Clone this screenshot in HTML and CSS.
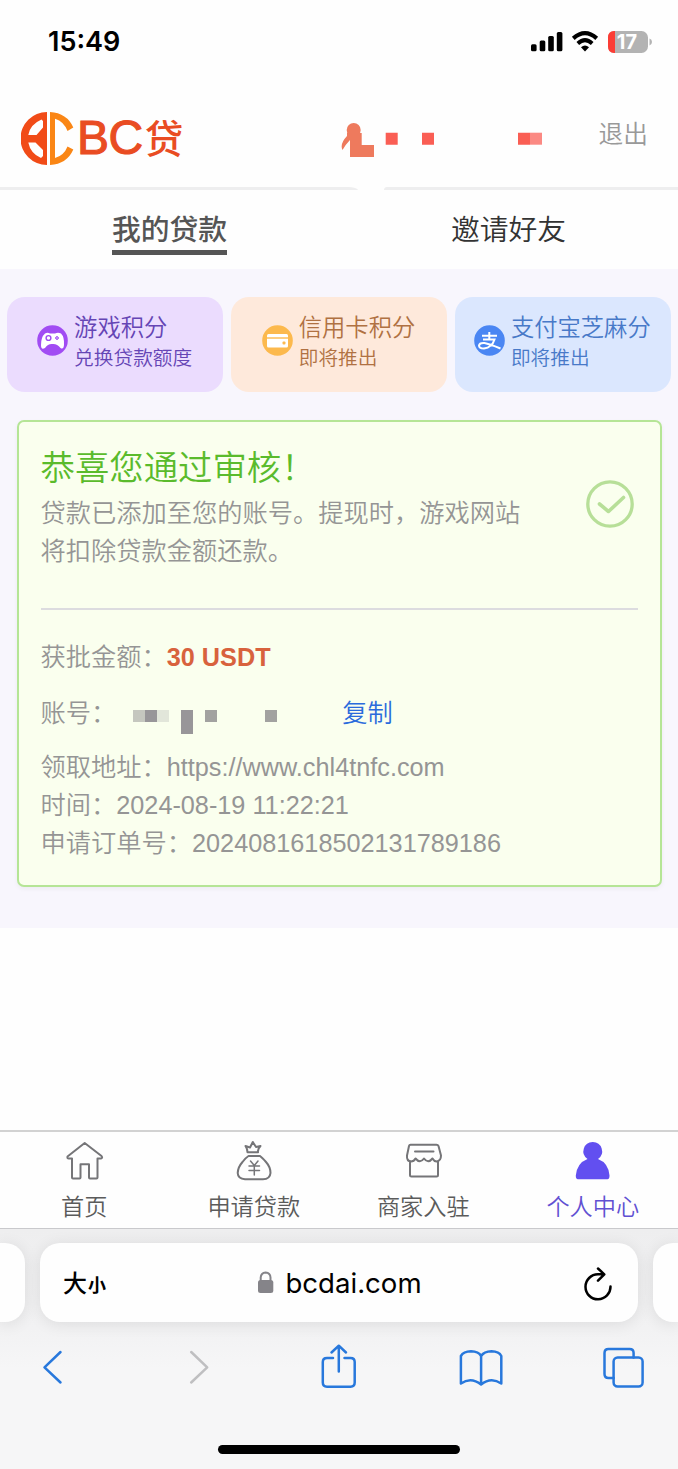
FILE: index.html
```html
<!DOCTYPE html>
<html lang="zh-CN">
<head>
<meta charset="utf-8">
<title>BC贷</title>
<link rel="stylesheet" href="styles.css">
</head>
<body>
<div class="status">
  <span class="time">15:49</span>
  <svg class="status-icons" viewBox="528 28 126 28" width="126" height="28">
    <rect x="531" y="44.200" width="5.600" height="7" rx="1.500"/><rect x="539.700" y="40.500" width="5.600" height="10.700" rx="1.500"/><rect x="548.200" y="36" width="5.600" height="15.200" rx="1.500"/><rect x="556.800" y="32" width="5.600" height="19.200" rx="1.500"/>
    <path d="M573.300 38.400Q585 27.800 596.700 38.400" fill="none" stroke="#000" stroke-width="4.200"/>
    <path d="M577.800 43.400Q585 37 592.200 43.400" fill="none" stroke="#000" stroke-width="4"/>
    <path d="M585 51.500L581 47.300Q585 43.800 589 47.300Z"/>
    <rect x="608" y="31" width="40" height="22" rx="6.500" fill="#b3b3b3"/>
    <path d="M615 31h-1q-6 0-6 6.500v9q0 6.500 6 6.500h1z" fill="#fb3d35"/>
    <path d="M649.500 38.500q2.500.8 2.500 3.500t-2.500 3.500z" fill="#b3b3b3"/>
    <text x="627" y="49.200" text-anchor="middle" class="battery-text">17</text>
  </svg>
</div>
<header class="header">
  <svg class="mark" viewBox="21 112 53 53" width="53" height="53">
    <path fill="#f14b17" fill-rule="evenodd" d="M47 112A26.500 26.500 0 0 0 47 165ZM41.500 119.500L43 121V127.500L36.500 135H28.300Q30 124.500 41.500 119.500ZM28.300 142.500H35.500L43 150V156L41 158Q30.500 153.500 28.300 142.500Z"/>
    <path fill="#fa8615" d="M50 112Q67 113 73.300 127.500L67.500 131Q64 121.500 55 118.700V158Q64 155.500 67.500 146.500L73.300 149.500Q67 164 50 165Z"/>
  </svg>
  <span class="brand">BC<b>贷</b></span>
  <svg class="user" viewBox="340 120 204 40" width="204" height="40">
    <circle cx="353.700" cy="130" r="7" fill="#ee7a5d"/>
    <path fill="#ee7a5d" d="M347 133H361.700V145H374V157H350V140Q346 144 342.500 150Q339.500 144 347 136Z"/>
    <path fill="#fa5e54" d="M385.700 132.700h12v12h-12zM422 132.700h12v12h-12zM518 132.700h12v12h-12z"/>
    <path fill="#fb8983" d="M530 132.700h12v12h-12z"/>
  </svg>
  <a class="logout">退出</a>
</header>
<div class="rule"><i></i><i></i></div>
<nav class="tabs">
  <a class="tab tab-active"><span>我的贷款</span></a>
  <a class="tab"><span>邀请好友</span></a>
</nav>
<main class="main">
  <section class="points">
    <div class="point purple">
      <svg viewBox="0 0 31 31" width="31" height="31"><circle cx="15.500" cy="15.500" r="15.300" fill="#a14cf3"/><path d="M8 8.500Q10.500 7 13 8.500H18Q21 7 24 8.500Q27.500 12 27 20Q26.500 25 23.500 23Q20 18.500 15.500 19Q11 18.500 8 23Q4 25.500 4 20Q4 12 8 8.500Z" fill="#fff"/><circle cx="11.500" cy="13" r="2.400" fill="none" stroke="#a14cf3" stroke-width="1.400"/><path d="M18 13h4m-2-2v4" stroke="#a14cf3" stroke-width="1.500" stroke-dasharray="1.500 1"/></svg>
      <div><h3>游戏积分</h3><p>兑换贷款额度</p></div>
    </div>
    <div class="point orange">
      <svg viewBox="0 0 31 31" width="31" height="31"><circle cx="15.500" cy="15.500" r="15.300" fill="#fcb94d"/><rect x="5" y="9" width="21" height="13.500" rx="1.500" fill="#fff"/><path d="M5 13h21" stroke="#fcb94d" stroke-width="1.400"/><rect x="20.500" y="16.500" width="3" height="3" rx="1" fill="#fcb94d"/></svg>
      <div><h3>信用卡积分</h3><p>即将推出</p></div>
    </div>
    <div class="point blue">
      <svg viewBox="0 0 31 31" width="31" height="31"><circle cx="15.500" cy="15.500" r="15.300" fill="#4a86f3"/><g fill="none" stroke="#fff" stroke-width="2"><path d="M8 10.800H23M15.300 7V14.500M9 14.500H20.500Q18 22.500 10 23.500Q5 23.500 5 20.500Q5.500 17.500 10.500 18Q15 18.800 26.500 23.500"/></g></svg>
      <div><h3>支付宝芝麻分</h3><p>即将推出</p></div>
    </div>
  </section>
  <section class="card">
    <div class="card-top">
      <div>
        <h2>恭喜您通过审核！</h2>
        <p>贷款已添加至您的账号。提现时，游戏网站<br>将扣除贷款金额还款。</p>
      </div>
      <svg class="check" viewBox="0 0 48 48" width="48" height="48" fill="none" stroke="#b7df98"><circle cx="24" cy="24" r="22.200" stroke-width="3.300"/><path d="M13.500 24L22.500 31.500L37.500 17.500" stroke-width="3.600" stroke-linecap="round" stroke-linejoin="round"/></svg>
    </div>
    <div class="line amount">获批金额：<strong>30 USDT</strong></div>
    <div class="line account">账号：
      <svg class="mask" viewBox="133 711 145 25" width="145" height="25">
        <path fill="#c5c7bf" d="M133 711h12v12h-12z"/><path fill="#989699" d="M145 711h12v12h-12zM181 711h12v24h-12z"/><path fill="#e2e6da" d="M157 711h12v12h-12z"/><path fill="#a2a2a0" d="M205 711h12v12h-12zM265 711h12v12h-12z"/>
      </svg>
      <a class="copy">复制</a>
    </div>
    <div class="line">领取地址：https://www.chl4tnfc.com</div>
    <div class="line">时间：2024-08-19 11:22:21</div>
    <div class="line">申请订单号：2024081618502131789186</div>
  </section>
</main>
<nav class="bottom">
  <a class="item"><svg viewBox="65 1140 40 42" width="40" height="42"><path d="M84.700 1143L67.500 1156.500Q67 1158.700 69 1158.500H72V1177.500Q72 1178.500 73 1178.500H79.500Q80.500 1178.500 80.500 1177.500V1164.300H89V1177.500Q89 1178.500 90 1178.500H96.500Q97.500 1178.500 97.500 1177.500V1158.500H101Q103 1158 101.500 1156Z"/></svg><span>首页</span></a>
  <a class="item"><svg viewBox="233 1140 42 42" width="42" height="42"><path d="M247.500 1152.300Q247.500 1149 245.500 1146L250 1147.500L252.800 1142L256 1147L260.500 1146Q257.500 1149 258 1152.300ZM248.500 1156H260Q262 1157.500 266 1162Q270.500 1167 270.500 1173Q270 1179.200 263 1179.200H245Q238 1179 237.700 1173Q238 1167 242.500 1162Q246 1157.500 248.500 1156Z"/><path d="M250.500 1161L254.300 1165.500L258 1161M249 1166H259.500M249 1170.500H259.500M254.300 1165.500V1175" stroke-width="1.500"/></svg><span>申请贷款</span></a>
  <a class="item"><svg viewBox="403 1140 42 42" width="42" height="42"><path d="M410.500 1144.700H436.500Q438 1144.700 438.500 1146L441 1155.500Q441 1161 436.500 1161.500Q434 1161.300 432.500 1158.500Q428 1164 424 1158.500Q420 1164 415.500 1158.500Q414 1161.500 411 1161.500Q406.500 1161 407 1155.500L409 1146Q409.300 1144.700 410.500 1144.700ZM410 1161V1175Q410 1176.500 411.500 1176.500H436.500Q438 1176.500 438 1175V1161M415 1151.500H433.500"/></svg><span>商家入驻</span></a>
  <a class="item item-active"><svg viewBox="572 1140 42 42" width="42" height="42"><path d="M592.700 1142A9.300 9.300 0 0 1 598 1159Q608.500 1163 609.500 1175.500Q609.500 1179.300 607.500 1179.300H578Q575.700 1179.300 575.800 1175.500Q577 1163 587.500 1159A9.300 9.300 0 0 1 592.700 1142Z"/></svg><span>个人中心</span></a>
</nav>
<footer class="browser">
  <div class="address-row">
    <div class="peek"></div>
    <div class="address">
      <span class="size">大<small>小</small></span>
      <span class="url"><svg viewBox="0 0 17 23" width="17" height="23"><rect x="1" y="9" width="15.300" height="13" rx="2.500" fill="#858489"/><path d="M3.700 10V6.500Q4 1.800 8.600 1.500Q13.300 1.800 13.500 6.500V10" fill="none" stroke="#858489" stroke-width="2"/></svg>bcdai.com</span>
      <svg viewBox="582 1263 32 36" width="32" height="36" fill="none" stroke="#000" stroke-width="2.500" stroke-linecap="round" stroke-linejoin="round"><path d="M610.500 1284.500A12.500 12.500 0 1 1 598 1272.300H604M598 1266.500L604.300 1272.300L598 1278.700"/></svg>
    </div>
    <div class="peek"></div>
  </div>
  <div class="toolbar">
    <svg viewBox="40 1343 25 47" width="25" height="47"><path d="M60.500 1352L44.500 1367.300L60.500 1382.500"/></svg>
    <svg class="forward" viewBox="187 1343 25 47" width="25" height="47"><path d="M191.200 1352L207.200 1367.300L191.200 1382.500"/></svg>
    <svg class="share" viewBox="319 1343 40 47" width="40" height="47"><path d="M333 1358H327Q322.800 1358 322.800 1362V1382.500Q322.800 1386.700 327 1386.700H350.500Q354.700 1386.700 354.700 1382.500V1362Q354.700 1358 350.500 1358H344.500M338.800 1371.500V1346M331.500 1352.500L338.800 1345.700L346 1352.500"/></svg>
    <svg class="book" viewBox="457 1343 48 47" width="48" height="47"><path d="M481.100 1356V1384.500Q471 1376.500 460.900 1383.500V1356Q463.500 1351.500 471 1351.300Q478.500 1351.500 481.100 1356Q484 1351.500 491.500 1351.300Q499 1351.500 501.300 1356V1383.500Q491 1376.500 481.100 1384.500"/></svg>
    <svg class="windows" viewBox="601 1343 45 47" width="45" height="47"><rect x="613.600" y="1357.500" width="29" height="29" rx="4"/><path d="M633.600 1357.500V1353Q633.600 1349 629.600 1349H608.500Q604.500 1349 604.500 1353V1374Q604.500 1378 608.500 1378H613.600"/></svg>
  </div>
  <div class="indicator"></div>
</footer>
</body>
</html>
```
FILE: styles.css
```css
* { box-sizing: border-box; }
body {
  margin: 0;
  width: 678px;
  height: 1469px;
  overflow: hidden;
  display: flex;
  flex-direction: column;
  background: #fefefe;
  color: #555;
  font-family: "Liberation Sans", "Noto Sans CJK SC", sans-serif;
  font-weight: 350;
}
svg { display: block; flex: none; }
h2, h3, p { margin: 0; font-weight: 350; }

.status { height: 84px; display: flex; justify-content: space-between; padding: 28px 24px 0 48px; }
.time { font: 600 27px/28px Inter, sans-serif; color: #000; }
.battery-text { font: 700 20px Inter, sans-serif; fill: #fff; }

.header { height: 103px; display: flex; align-items: center; padding: 6px 30px 0 21px; }
.brand { width: 266px; padding-left: 3px; font-size: 48px; line-height: 54px; color: #e94c22; -webkit-text-stroke: 1.100px #e94c22; white-space: nowrap; letter-spacing: -0.500px; }
.brand b { font-size: 38.500px; font-weight: 500; -webkit-text-stroke: 0; margin-left: 2px; vertical-align: 1px; }
.user { margin-top: 2px; }
.logout { margin-left: auto; font-size: 24.700px; line-height: 32px; color: #999; padding-bottom: 7px; }

.rule { height: 3px; display: flex; justify-content: space-between; gap: 26px; }
.rule i { background: #eeeeef; width: 358px; border-top-right-radius: 10px 3px; }
.rule i + i { width: 294px; border-radius: 10px 0 0; }

.tabs { height: 79px; display: flex; }
.tab { flex: 1; text-align: center; font-size: 28.800px; line-height: 44px; padding-top: 18px; color: #333; }
.tab span { display: inline-block; }
.tab-active { color: #555; font-weight: 500; }
.tab-active span { border-bottom: 5px solid #555; height: 47px; }

.main { height: 659px; background: #f8f6fd; padding: 28px 7px 0; }
.points { display: flex; gap: 7.500px; margin-bottom: 28px; }
.point { flex: 1; height: 95px; border-radius: 18px; display: flex; justify-content: center; gap: 6px; padding: 16px 1px 0 0; }
.point svg { margin-top: 12px; }
.point h3 { font-size: 23.300px; line-height: 30px; }
.point p { font-size: 19.700px; line-height: 30px; }
.purple { background: #ebdcfe; color: #6545b5; }
.orange { background: #fee9db; color: #b07142; }
.blue { background: #dbe7fe; color: #4879c8; }

.card { width: 645px; height: 467px; margin-left: 9.500px; padding: 20px 22px; border: 2px solid #b5e596; border-radius: 7px; background: #faffee; box-shadow: 0 2px 5px #0000000c; color: #959595; font-size: 25.250px; line-height: 38px; }
.card h2 { font-size: 34.400px; line-height: 52px; color: #5abb2c; }
.card-top { display: flex; justify-content: space-between; height: 168px; margin-bottom: 28px; border-bottom: 2px solid #dcdcdf; }
.check { margin: 38px 4px 0 0; }
.amount { margin-bottom: 18px; }
.amount strong { color: #d8623d; font-weight: 700; }
.account { display: flex; height: 38px; margin-bottom: 16px; }
.mask { margin: 16px 0 0 17px; }
.copy { margin-left: 64px; color: #2b6bdc; }

.bottom { height: 99px; margin-top: 202px; display: flex; border-top: 2px solid #d2d2d2; border-bottom: 1px solid #c9c9cc; }
.item { flex: 1; display: flex; flex-direction: column; align-items: center; padding-top: 8px; color: #5b5b5b; font-size: 23.200px; line-height: 34px; }
.item svg { fill: none; stroke: #757578; stroke-width: 2; stroke-linejoin: round; stroke-linecap: round; }
.item span { padding: 8px 1px 0 0; }
.item-active { color: #6150d2; }
.item-active svg { fill: #624ff0; stroke: none; }

.browser { height: 240px; background: linear-gradient(#eeeeef, #f2f2f3 100px, #f6f6f7 140px); display: flex; flex-direction: column; align-items: center; }
.address-row { width: 678px; padding-top: 14px; display: flex; justify-content: space-between; }
.address, .peek { height: 79px; background: #fefefe; border-radius: 20px; box-shadow: 0 2px 16px #00000018; }
.peek { width: 25px; border-radius: 0 20px 20px 0; }
.address + .peek { border-radius: 20px 0 0 20px; }
.address { width: 598px; display: flex; align-items: center; justify-content: space-between; padding: 0 24px 0 23px; color: #000; }
.size { width: 60px; font: 500 24px/40px "Noto Sans CJK SC", sans-serif; }
.size small { font-size: 18px; margin-left: 1px; font-weight: 700; }
.url { display: flex; align-items: center; gap: 11px; margin-right: 26px; font: 400 27.600px/40px Inter, sans-serif; }
.toolbar { width: 678px; padding: 21px 32px 0 40px; display: flex; }
.toolbar svg { fill: none; stroke: #2878dc; stroke-width: 2.500; stroke-linecap: round; stroke-linejoin: round; }
.toolbar .forward { margin-left: 122px; stroke: #bfbfc1; }
.share { margin-left: 107px; }
.book { margin-left: 98px; }
.windows { margin-left: 96px; }
.indicator { width: 242px; height: 9px; margin-top: 55px; border-radius: 5px; background: #000; }
```
